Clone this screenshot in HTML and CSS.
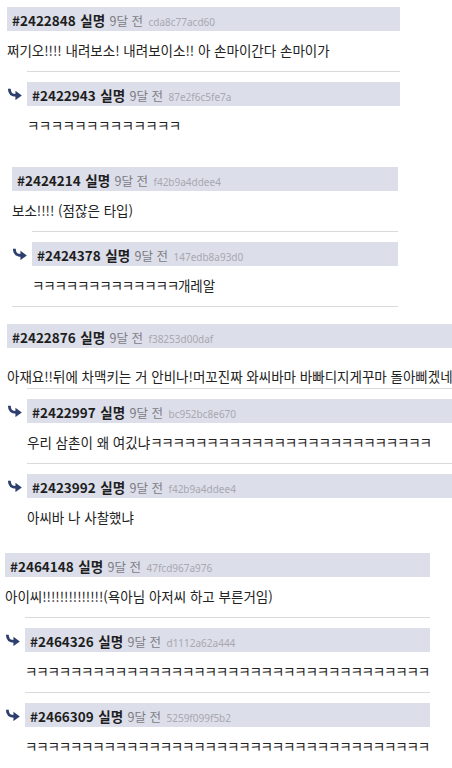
FILE: index.html
```html
<!DOCTYPE html>
<html lang="ko">

<head>
    <meta charset="UTF-8">
    <meta name="viewport" content="width=device-width, initial-scale=1.0">
    <title>댓글</title>
    <link rel="stylesheet" href="styles.css">
</head>

<body>
    <main class="thread">

        <section class="group g1">
            <article class="post">
                <div class="post-head"><b class="no">#2422848</b> <b class="nick">실명</b> <span class="ago">9달 전</span> <span class="hash">cda8c77acd60</span></div>
                <p class="post-body">쩌기오!!!! 내려보소! 내려보이소!! 아 손마이간다 손마이가</p>
            </article>
            <article class="reply">
                <svg class="reply-arrow" viewBox="0 0 16 12"><path d="M2.5 0.5 C2.5 6 5 7.5 10 7.5" /><polygon points="9,2.5 15.8,7.5 9,12.5" /></svg>
                <div class="reply-main">
                    <div class="post-head"><b class="no">#2422943</b> <b class="nick">실명</b> <span class="ago">9달 전</span> <span class="hash">87e2f6c5fe7a</span></div>
                    <p class="post-body"><span class="kk">ㅋㅋㅋㅋㅋㅋㅋㅋㅋㅋㅋㅋㅋ</span></p>
                </div>
            </article>
        </section>

        <section class="group g2">
            <article class="post">
                <div class="post-head"><b class="no">#2424214</b> <b class="nick">실명</b> <span class="ago">9달 전</span> <span class="hash">f42b9a4ddee4</span></div>
                <p class="post-body">보소!!!! (점잖은 타입)</p>
            </article>
            <article class="reply">
                <svg class="reply-arrow" viewBox="0 0 16 12"><path d="M2.5 0.5 C2.5 6 5 7.5 10 7.5" /><polygon points="9,2.5 15.8,7.5 9,12.5" /></svg>
                <div class="reply-main">
                    <div class="post-head"><b class="no">#2424378</b> <b class="nick">실명</b> <span class="ago">9달 전</span> <span class="hash">147edb8a93d0</span></div>
                    <p class="post-body"><span class="kk">ㅋㅋㅋㅋㅋㅋㅋㅋㅋㅋㅋㅋㅋ</span>개레알</p>
                </div>
            </article>
        </section>

        <section class="group g3">
            <article class="post">
                <div class="post-head"><b class="no">#2422876</b> <b class="nick">실명</b> <span class="ago">9달 전</span> <span class="hash">f38253d00daf</span></div>
                <p class="post-body low">아재요!!뒤에 차맥키는 거 안비나!머꼬진짜 와씨바마 바빠디지게꾸마 돌아삐겠네</p>
            </article>
            <article class="reply">
                <svg class="reply-arrow" viewBox="0 0 16 12"><path d="M2.5 0.5 C2.5 6 5 7.5 10 7.5" /><polygon points="9,2.5 15.8,7.5 9,12.5" /></svg>
                <div class="reply-main">
                    <div class="post-head"><b class="no">#2422997</b> <b class="nick">실명</b> <span class="ago">9달 전</span> <span class="hash">bc952bc8e670</span></div>
                    <p class="post-body">우리 삼촌이 왜 여깄냐<span class="kk">ㅋㅋㅋㅋㅋㅋㅋㅋㅋㅋㅋㅋㅋㅋㅋㅋㅋㅋㅋㅋㅋㅋㅋㅋㅋ</span></p>
                </div>
            </article>
            <article class="reply">
                <svg class="reply-arrow" viewBox="0 0 16 12"><path d="M2.5 0.5 C2.5 6 5 7.5 10 7.5" /><polygon points="9,2.5 15.8,7.5 9,12.5" /></svg>
                <div class="reply-main">
                    <div class="post-head"><b class="no">#2423992</b> <b class="nick">실명</b> <span class="ago">9달 전</span> <span class="hash">f42b9a4ddee4</span></div>
                    <p class="post-body">아씨바 나 사찰했냐</p>
                </div>
            </article>
        </section>

        <section class="group g4">
            <article class="post">
                <div class="post-head"><b class="no">#2464148</b> <b class="nick">실명</b> <span class="ago">9달 전</span> <span class="hash">47fcd967a976</span></div>
                <p class="post-body">아이씨!!!!!!!!!!!!!!(욕아님 아저씨 하고 부른거임)</p>
            </article>
            <article class="reply">
                <svg class="reply-arrow" viewBox="0 0 16 12"><path d="M2.5 0.5 C2.5 6 5 7.5 10 7.5" /><polygon points="9,2.5 15.8,7.5 9,12.5" /></svg>
                <div class="reply-main">
                    <div class="post-head"><b class="no">#2464326</b> <b class="nick">실명</b> <span class="ago">9달 전</span> <span class="hash">d1112a62a444</span></div>
                    <p class="post-body"><span class="kk">ㅋㅋㅋㅋㅋㅋㅋㅋㅋㅋㅋㅋㅋㅋㅋㅋㅋㅋㅋㅋㅋㅋㅋㅋㅋㅋㅋㅋㅋㅋㅋㅋㅋㅋㅋㅋ</span></p>
                </div>
            </article>
            <article class="reply">
                <svg class="reply-arrow" viewBox="0 0 16 12"><path d="M2.5 0.5 C2.5 6 5 7.5 10 7.5" /><polygon points="9,2.5 15.8,7.5 9,12.5" /></svg>
                <div class="reply-main">
                    <div class="post-head"><b class="no">#2466309</b> <b class="nick">실명</b> <span class="ago">9달 전</span> <span class="hash">5259f099f5b2</span></div>
                    <p class="post-body"><span class="kk">ㅋㅋㅋㅋㅋㅋㅋㅋㅋㅋㅋㅋㅋㅋㅋㅋㅋㅋㅋㅋㅋㅋㅋㅋㅋㅋㅋㅋㅋㅋㅋㅋㅋㅋㅋㅋ</span></p>
                </div>
            </article>
        </section>

    </main>
</body>

</html>
```

FILE: styles.css
```css
/**** DEFAULTS ****/

* {
    padding: 0;
    margin: 0;
    box-sizing: border-box;
}

html {
    font-family: "Noto Sans CJK KR", "Noto Sans", sans-serif;
    color: #222;
    background: #fff;
}

body {
    overflow: hidden;
}

/**** GROUPS ****/

.thread {
    padding-top: 7px;
}

.group {
    display: flex;
    flex-direction: column;
}

.g1 {
    margin-left: 7px;
    width: 393px;
}

.g2 {
    margin-top: 21px;
    margin-left: 12px;
    width: 386px;
    border-bottom: 1px solid #dadada;
}

.g3 {
    margin-top: 17px;
    margin-left: 7px;
    width: 460px;
}

.g4 {
    margin-top: 15px;
    margin-left: 5px;
    width: 425px;
}

/**** POSTS ****/

.post-head {
    height: 24px;
    line-height: 24px;
    padding-left: 5px;
    background: #dcdeea;
    white-space: nowrap;
    overflow: hidden;
}

.no,
.nick {
    font-size: 13.5px;
    font-weight: 700;
    color: #1e1e1e;
}

.ago {
    font-size: 12.5px;
    color: #7c7c84;
}

.hash {
    font-family: "Noto Sans", sans-serif;
    font-size: 10px;
    color: #a8a8b0;
    margin-left: 1px;
}

.post-body {
    font-size: 13.5px;
    line-height: 16px;
    padding: 11px 0 13px;
    white-space: nowrap;
}

.post-body.low {
    padding: 20px 0 4px;
}

/* the ㅋ runs sit tighter than the rest of the text */
.kk {
    letter-spacing: -1.2px;
}

.g1 .kk {
    letter-spacing: -0.6px;
}

/**** REPLIES ****/

.reply {
    display: flex;
    align-items: flex-start;
}

.reply-arrow {
    flex: 0 0 21px;
    width: 21px;
    height: 12px;
    margin-top: 17px;
    padding-right: 6px;
}

.reply-arrow path {
    fill: none;
    stroke: #2d3f6e;
    stroke-width: 3;
}

.reply-arrow polygon {
    fill: #2d3f6e;
}

.reply-main {
    flex: 1;
    border-top: 1px solid #dadada;
    padding-top: 10px;
    margin-left: -1px;
}
```
